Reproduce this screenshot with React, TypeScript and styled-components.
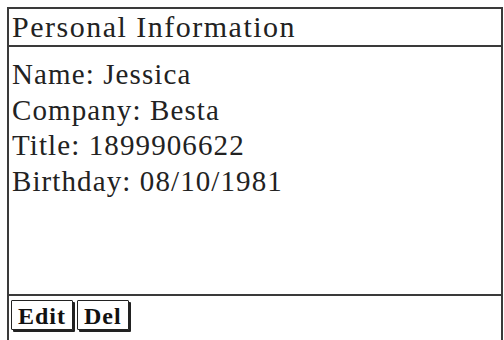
import React from "react";
import styled, { createGlobalStyle } from "styled-components";

const Global = createGlobalStyle`
  html, body { margin: 0; padding: 0; background: #fff; }
  body { width: 504px; height: 340px; overflow: hidden; }
`;

const Page = styled.div`
  padding: 7px 1px 0 7px;
  height: 340px;
  box-sizing: border-box;
`;

const Panel = styled.div`
  display: flex;
  flex-direction: column;
  border: 2px solid #3a3a3a;
  border-bottom: none;
  height: 340px;
  box-sizing: border-box;
  font-family: "Liberation Serif", serif;
  color: #222;
`;

const Header = styled.div`
  height: 36px;
  border-bottom: 2px solid #3a3a3a;
  padding-left: 3px;
  font-size: 30px;
  line-height: 36px;
  letter-spacing: 1.5px;
  white-space: nowrap;
`;

const Body = styled.div`
  height: 249px;
  border-bottom: 2px solid #3a3a3a;
  padding: 10px 0 0 3px;
  box-sizing: border-box;
  display: flex;
  flex-direction: column;
`;

const Line = styled.div`
  font-size: 29px;
  line-height: 35.5px;
  letter-spacing: 1.1px;
  white-space: nowrap;
`;

const Footer = styled.div`
  display: flex;
  gap: 4px;
  padding: 4px 0 0 2px;
`;

const Button = styled.button`
  font-family: "Liberation Serif", serif;
  font-weight: bold;
  font-size: 24px;
  line-height: 26px;
  letter-spacing: 1px;
  color: #111;
  background: #fff;
  border: 1px solid #222;
  box-shadow: 2px 2px 0 #222;
  padding: 2px 6px 0 6px;
  height: 30px;
  border-radius: 1px;
  cursor: pointer;
`;

export default function App() {
  return (
    <>
      <Global />
      <Page>
        <Panel>
          <Header>Personal Information</Header>
          <Body>
            <Line>Name: Jessica</Line>
            <Line>Company: Besta</Line>
            <Line>Title: 1899906622</Line>
            <Line>Birthday: 08/10/1981</Line>
          </Body>
          <Footer>
            <Button>Edit</Button>
            <Button>Del</Button>
          </Footer>
        </Panel>
      </Page>
    </>
  );
}
